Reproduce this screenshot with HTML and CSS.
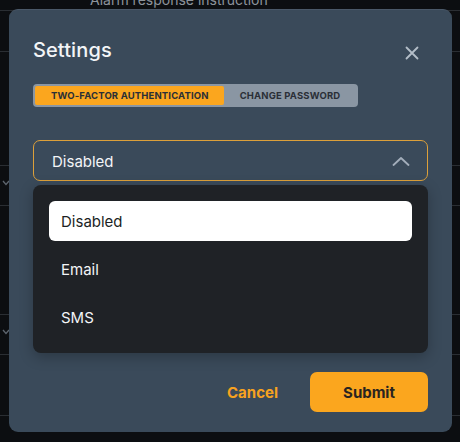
FILE: index.html
```html
<!DOCTYPE html>
<html lang="en">
<head>
    <meta charset="UTF-8">
    <meta name="viewport" content="width=device-width, initial-scale=1.0">
    <title>Settings</title>
    <link rel="stylesheet" href="styles.css">
</head>
<body>

    <!-- Page behind the dialog -->
    <div class="page">
        <div class="page-head">Alarm response instruction</div>
        <div class="row r1"></div>
        <div class="row r2"></div>
        <div class="row r3">
            <svg class="caret" width="8" height="6" viewBox="0 0 8 6"><path d="M1 1 L4 4.5 L7 1" fill="none" stroke="#5d656e" stroke-width="1.3"/></svg>
        </div>
        <div class="row r4"></div>
        <div class="row r5">
            <svg class="caret" width="8" height="6" viewBox="0 0 8 6"><path d="M1 1 L4 4.5 L7 1" fill="none" stroke="#5d656e" stroke-width="1.3"/></svg>
        </div>
        <div class="row r6"></div>
    </div>

    <!-- Settings Dialog -->
    <div class="dialog">
        <div class="dialog-head">
            <h2>Settings</h2>
            <button class="close" aria-label="Close">
                <svg width="14" height="14" viewBox="0 0 14 14">
                    <path d="M1.5 1.5 L12.5 12.5 M12.5 1.5 L1.5 12.5" stroke="#b4bec8" stroke-width="1.8" stroke-linecap="round"/>
                </svg>
            </button>
        </div>

        <div class="tabs">
            <div class="tab active">TWO-FACTOR AUTHENTICATION</div>
            <div class="tab">CHANGE PASSWORD</div>
        </div>

        <div class="select">
            <span>Disabled</span>
            <svg width="18" height="10" viewBox="0 0 18 10">
                <path d="M1.5 9 L9 2 L16.5 9" fill="none" stroke="#a3aebb" stroke-width="1.8" stroke-linecap="round" stroke-linejoin="round"/>
            </svg>
        </div>

        <ul class="menu">
            <li class="selected">Disabled</li>
            <li>Email</li>
            <li>SMS</li>
        </ul>

        <div class="actions">
            <button class="cancel">Cancel</button>
            <button class="submit">Submit</button>
        </div>
    </div>

</body>
</html>
```

FILE: styles.css
```css
/* General Styles */
body {
    margin: 0;
    padding: 0;
    background-color: #0c0e11;
    font-family: 'Inter', 'Noto Sans', sans-serif;
    color: white;
    height: 442px;
    overflow: hidden;
}

/* Page behind */
.page {
    color: #8c939b;
}

.page-head {
    margin-top: -9px;
    padding-left: 90px;
    font-size: 14px;
    height: 19px;
    border-bottom: 1px solid #2a2e33;
}

.row {
    border-bottom: 1px solid #2a2e33;
    position: relative;
}

.r1 { height: 40px; }
.r2 { height: 113px; }
.r3 { height: 39px; }
.r4 { height: 108px; }
.r5 { height: 39px; }
.r6 { height: 60px; }

.caret {
    position: absolute;
    left: 2px;
    top: 14px;
}

/* Dialog */
.dialog {
    position: absolute;
    left: 9px;
    top: 9px;
    width: 443px;
    height: 423px;
    box-sizing: border-box;
    padding: 24px 24px 20px 24px;
    background-color: #3a4a5a;
    border-radius: 9px;
    border-top: 1px solid #4a5868;
    display: flex;
    flex-direction: column;
}

.dialog-head {
    display: flex;
    justify-content: space-between;
    align-items: center;
    height: 32px;
}

.dialog-head h2 {
    margin: 0;
    font-size: 20px;
    font-weight: 500;
    color: #f3f5f7;
    letter-spacing: 0.1px;
}

.close {
    background: none;
    border: none;
    padding: 0;
    margin-right: 9px;
    margin-top: 6px;
    display: flex;
}

/* Tabs */
.tabs {
    display: flex;
    align-self: flex-start;
    margin-top: 18px;
    padding: 2px;
    background-color: #8a96a3;
    border-radius: 4px;
}

.tab {
    height: 19px;
    line-height: 19px;
    padding: 0 16px;
    font-size: 9.5px;
    font-weight: 700;
    color: #2a2f37;
    letter-spacing: 0.15px;
    border-radius: 2px;
}

.tab.active {
    background-color: #fba61e;
    padding: 0 15px 0 16px;
}

/* Select */
.select {
    margin-top: 33px;
    height: 41px;
    box-sizing: border-box;
    border: 1.5px solid #dca03a;
    border-radius: 7px;
    padding: 0 17px 0 18px;
    display: flex;
    justify-content: space-between;
    align-items: center;
    font-size: 15px;
    color: #f3f5f7;
}

.select span {
    padding-top: 2px;
}

.menu {
    list-style: none;
    margin: 4px 0 0 0;
    padding: 16px;
    background-color: #1f2226;
    border-radius: 8px;
    display: flex;
    flex-direction: column;
    gap: 8px;
    box-shadow: 0 4px 14px rgba(0, 0, 0, 0.25);
}

.menu li {
    height: 40px;
    line-height: 42px;
    padding: 0 12px;
    font-size: 15px;
    color: #f3f5f7;
    border-radius: 6px;
}

.menu li.selected {
    background-color: #ffffff;
    color: #1c1f24;
}

/* Actions */
.actions {
    margin-top: auto;
    display: flex;
    justify-content: flex-end;
    align-items: center;
    gap: 32px;
}

.actions button {
    font-family: 'Inter', 'Noto Sans', sans-serif;
    font-size: 15px;
    font-weight: 700;
    border: none;
    cursor: pointer;
}

.cancel {
    background: none;
    color: #f7a21f;
    padding: 0;
}

.submit {
    width: 118px;
    height: 40px;
    background-color: #fba61e;
    color: #2a2420;
    border-radius: 7px;
}
```
